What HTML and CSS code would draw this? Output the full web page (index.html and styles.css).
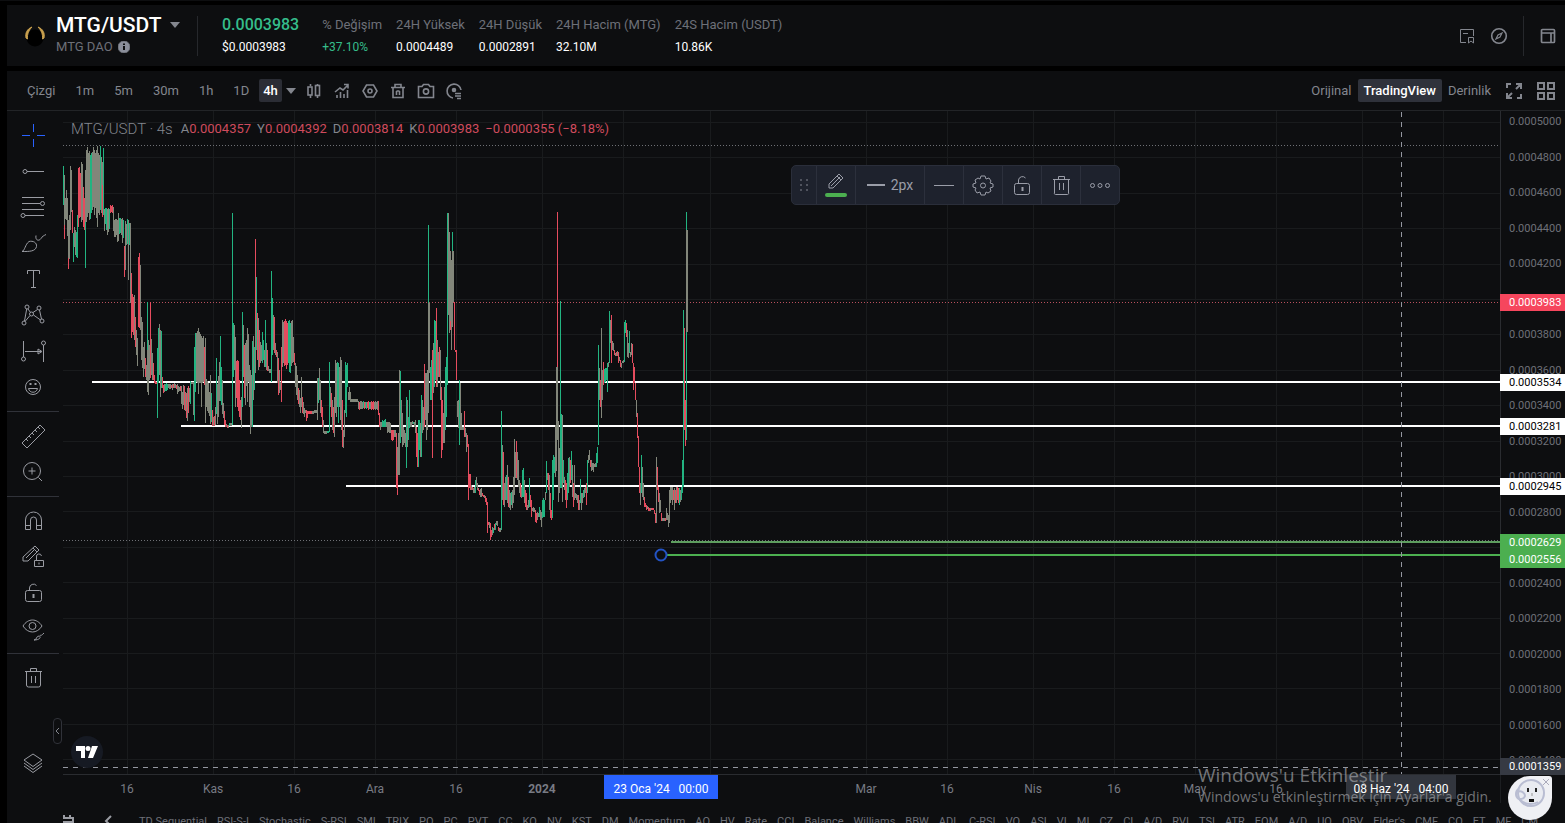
FILE: index.html
```html
<!DOCTYPE html>
<html lang="tr">
<head>
    <meta charset="UTF-8">
    <meta name="viewport" content="width=device-width, initial-scale=1.0">
    <title>MTG/USDT</title>
    <link rel="stylesheet" href="styles.css">
</head>
<body>
    <div class="app">
        <header class="ticker">
            <svg class="coin" width="20" height="22" viewBox="0 0 20 22">
                <circle cx="10" cy="13" r="8.500" fill="#000"/>
                <path d="M7 2C2 4 0 8 1 13l1.500 1C2 9 4 5 7 2zM13 2c5 2 7 6 6 11l-1.500 1C18 9 16 5 13 2z" fill="#c9a04e" stroke="#c9a04e"/>
            </svg>
            <div class="pair">
                <h1>MTG/USDT <span class="caret"></span></h1>
                <p>MTG DAO
                    <svg width="12" height="12" viewBox="0 0 12 12"><circle cx="6" cy="6" r="6" fill="#8b8f9b"/><path d="M6 5v4M6 2.500v1.500" stroke="#0d0e10" stroke-width="2"/></svg>
                </p>
            </div>
            <div class="divider"></div>
            <dl class="stats">
                <div class="last"><dt>0.0003983</dt><dd>$0.0003983</dd></div>
                <div><dt>% Değişim</dt><dd class="up">+37.10%</dd></div>
                <div><dt>24H Yüksek</dt><dd>0.0004489</dd></div>
                <div><dt>24H Düşük</dt><dd>0.0002891</dd></div>
                <div><dt>24H Hacim (MTG)</dt><dd>32.10M</dd></div>
                <div><dt>24S Hacim (USDT)</dt><dd>10.86K</dd></div>
            </dl>
            <div class="ticker-tools">
                <button aria-label="Notlar"><svg width="16" height="16" viewBox="0 0 16 16"><path d="M7 14.500H1.500v-13h13V8M4 5.500h5M9.500 15V9.500h5V15l-2.500-2z"/></svg></button>
                <button aria-label="Keşfet"><svg width="18" height="18" viewBox="0 0 18 18" stroke-width="1.600"><circle cx="9" cy="9" r="7.300"/><path d="M12 6l-2 4-4 2 2-4z" stroke-width="1.200"/></svg></button>
                <div class="divider"></div>
                <button aria-label="Yerleşim"><svg width="16" height="16" viewBox="0 0 16 16" stroke-width="1.700"><rect x="1.500" y="1.500" width="13" height="13" rx="1"/><path d="M2 5h12M11 5v9"/></svg></button>
            </div>
        </header>

        <main class="board">
            <nav class="toolbar">
                <div class="intervals">
                    <button>Çizgi</button>
                    <button>1m</button>
                    <button>5m</button>
                    <button>30m</button>
                    <button>1h</button>
                    <button>1D</button>
                    <button class="active">4h</button>
                    <button class="more" aria-label="Diğer"><span class="caret"></span></button>
                </div>
                <div class="chart-tools">
                    <button aria-label="Mum"><svg width="16" height="16" viewBox="0 0 16 16"><path d="M4.500 1v2M4.500 12v3M11.500 1v1M11.500 13v2"/><rect x="2" y="4" width="4" height="8"/><rect x="9.500" y="2.500" width="4" height="10"/></svg></button>
                    <button aria-label="Göstergeler"><svg width="16" height="16" viewBox="0 0 16 16"><path d="M3 15v-3M6.500 15V9M10 15v-4M13.500 15V7M1 9l5-4 3 2 5-5M10 1.500h4v4"/></svg></button>
                    <button aria-label="Ayarlar"><svg width="16" height="16" viewBox="0 0 16 16"><path d="M4.500 2h7L15 8l-3.500 6h-7L1 8z"/><circle cx="8" cy="8" r="2"/></svg></button>
                    <button aria-label="Sil"><svg width="16" height="16" viewBox="0 0 16 16"><path d="M1 4.500h14M3 5v9.500h10V5M5 4V1.500h6V4M6.500 8v4M9.500 8v4M6.500 8h3"/></svg></button>
                    <button aria-label="Ekran görüntüsü"><svg width="18" height="16" viewBox="0 0 18 16"><path d="M1.500 3.500H5l1.500-2h5l1.500 2h3.500v11h-15z"/><circle cx="9" cy="8.500" r="2.600"/></svg></button>
                    <button aria-label="Emirler"><svg width="18" height="18" viewBox="0 0 18 18"><path d="M8 16a7 7 0 1 1 8-8M10 11.500h6M10 14h6M12 16.500h4"/><circle cx="9" cy="8" r="1.500" fill="currentColor"/></svg></button>
                </div>
                <div class="views">
                    <button>Orijinal</button>
                    <button class="active">TradingView</button>
                    <button>Derinlik</button>
                    <button class="icon" aria-label="Tam ekran"><svg width="18" height="18" viewBox="0 0 18 18" stroke-width="2"><path d="M2 6V2h4M11 2h5v5M16 2l-5 5M16 12v4h-4M7 16H2v-5M2 16l5-5"/></svg></button>
                    <button class="icon" aria-label="Izgara"><svg width="18" height="18" viewBox="0 0 18 18" stroke-width="2"><path d="M1 1h6v6H1zM11 1h6v6h-6zM1 11h6v6H1zM11 11h6v6h-6z"/></svg></button>
                </div>
            </nav>

            <div class="workspace">
                <aside class="drawbar">
                    <div class="group">
                        <button class="cross" aria-label="İmleç"><svg viewBox="0 0 28 28"><path d="M14.500 3v8M14.500 18v8M3 14.500h8M18 14.500h8"/></svg></button>
                        <button aria-label="Çizgi"><svg viewBox="0 0 28 28"><circle cx="6" cy="14.500" r="2"/><path d="M8 14.500h17"/></svg></button>
                        <button aria-label="Fibonacci"><svg viewBox="0 0 28 28"><path d="M3 4.500h22M3 10.500h18M3 16.500h22M6 22.500h19"/><circle cx="23.500" cy="10.500" r="2"/><circle cx="4" cy="22.500" r="2"/></svg></button>
                        <button aria-label="Fırça"><svg viewBox="0 0 28 28"><path d="M3 22.500c3-1 3-7 7-10 4-1 8 1 7.500 5-1 5-7 5-14.500 5zM17 6.500c-1 5 3 6 5 3 1-2 3-3 5-4"/></svg></button>
                        <button aria-label="Metin"><svg viewBox="0 0 28 28"><path d="M8.500 9V5.500h12V9M14.500 5.500v17M12 22.500h5"/></svg></button>
                        <button aria-label="Formasyon"><svg viewBox="0 0 28 28"><circle cx="8" cy="6" r="2"/><circle cx="20" cy="7" r="2"/><circle cx="12.500" cy="13" r="2"/><circle cx="5" cy="22" r="2"/><circle cx="23" cy="20" r="2"/><path d="M7.700 8L5.500 20M9 8l2.500 3.500M14 11.500L18.500 8.500M20.500 9l2 9M11 14.500l-5 6M14.500 14l7 5"/></svg></button>
                        <button aria-label="Ölçüm"><svg viewBox="0 0 28 28"><path d="M4.500 4v16M24.500 8v17M6 14.500h16M19 12l4 2.500-4 2.500z"/><circle cx="4.500" cy="22" r="2"/><circle cx="24.500" cy="6" r="2"/></svg></button>
                        <button aria-label="Simgeler"><svg viewBox="0 0 28 28"><circle cx="14" cy="14" r="7.500"/><path d="M9.500 15.500c1 5 8 5 9 0zM10 11h3M15 11h3M11.500 10v2M16.500 10v2"/></svg></button>
                    </div>
                    <div class="group">
                        <button aria-label="Cetvel"><svg viewBox="0 0 28 28"><path d="M3 21L21 3l5 5L8 26zM7 17l2 2M10 14l2 2M13 11l2 2M16 8l2 2M19 5l2 2"/></svg></button>
                        <button aria-label="Yakınlaştır"><svg viewBox="0 0 28 28"><circle cx="13" cy="13" r="8.500"/><path d="M19.500 19.500l3.500 3.500M9.500 13h7M13 9.500v7"/></svg></button>
                    </div>
                    <div class="group">
                        <button aria-label="Mıknatıs"><svg viewBox="0 0 28 28"><path d="M6.500 22.500V13a8 8 0 0 1 16 0v9.500h-5V13a3 3 0 0 0-6 0v9.500zM6.500 18.500h5M17.500 18.500h5"/></svg></button>
                        <button aria-label="Çizim modu"><svg viewBox="0 0 28 28"><path d="M4 18v-4L16 3l4 4L9 18H4zM14 5l4 4M7 15l9-9M15.500 17.500h9v6h-9zM17.500 17v-3a2.500 2.500 0 0 1 5-1M20 19.500v2"/></svg></button>
                        <button aria-label="Kilitle"><svg viewBox="0 0 28 28"><rect x="6.500" y="11.500" width="16" height="11" rx="2"/><path d="M10.500 11V9a4 4 0 0 1 7-2.500"/><path d="M14.500 15v4" stroke-width="2"/></svg></button>
                        <button aria-label="Gizle"><svg viewBox="0 0 28 28"><path d="M4 11c5-8 14-8 19 0-5 8-14 8-19 0zM15 25c3 0 2-4 5-4 2 0 2 4-5 4zM21 20c1 1 2 0 4-2"/><circle cx="13.500" cy="11" r="3.500"/></svg></button>
                    </div>
                    <div class="group">
                        <button aria-label="Çizimleri sil"><svg viewBox="0 0 28 28"><path d="M6 7.500h17M7.500 8v13a2 2 0 0 0 2 2h10a2 2 0 0 0 2-2V8M11.500 7V4.500h6V7M12.500 12v7M16.500 12v7"/></svg></button>
                    </div>
                    <button class="layers" aria-label="Nesne ağacı"><svg viewBox="0 0 28 28"><path d="M14 5l9 6-9 6.500L5 11zM5 14l9 6.500 9-6.500M5 17l9 6.500 9-6.500"/></svg></button>
                </aside>

                <section class="chart">
                    <div class="pane">
                        <svg class="plot">
                            <g id="grid" class="grid"></g>
                            <line class="dotted" x1="0" x2="100%" y1="34.500" y2="34.500"/>
                            <line class="dotted red" x1="0" x2="100%" y1="191.500" y2="191.500"/>
                            <line class="dotted" x1="0" x2="100%" y1="429.500" y2="429.500"/>
                            <line class="level" x1="29" x2="100%" y1="271" y2="271"/>
                            <line class="level" x1="118" x2="100%" y1="315" y2="315"/>
                            <line class="level" x1="283" x2="100%" y1="375" y2="375"/>
                            <g id="candles" class="candles" transform="translate(-63 -111)"></g>
                            <line class="level green soft" x1="608" x2="100%" y1="431" y2="431"/>
                            <line class="level green" x1="604" x2="100%" y1="444" y2="444"/>
                            <circle cx="598" cy="444" r="5.500" fill="#0d0e10" stroke="#2353c4" stroke-width="2"/>
                            <path class="crosshair" d="M1338.500 1V663"/>
                            <line class="crosshair" x1="0" x2="100%" y1="656.500" y2="656.500"/>
                        </svg>
                        <p class="legend"><span class="symbol">MTG/USDT · 4s</span> <span>A<b>0.0004357</b></span> <span>Y<b>0.0004392</b></span> <span>D<b>0.0003814</b></span> <span>K<b>0.0003983</b></span> <b>−0.0000355 (−8.18%)</b></p>
                        <div class="line-tools">
                            <span class="grip"><svg width="10" height="14" viewBox="0 0 10 14"><path d="M1 1h2v2H1zM7 1h2v2H7zM1 6h2v2H1zM7 6h2v2H7zM1 11h2v2H1zM7 11h2v2H7z" fill="#50535e" stroke="none"/></svg></span>
                            <button aria-label="Renk"><svg viewBox="0 0 28 28"><path d="M7 17v-4L17 3l4 4-10 10zM15 5l4 4M9 15l9-9"/><path d="M5 24h18" stroke="#4caf50" stroke-width="4" stroke-linecap="round"/></svg></button>
                            <button class="wide"><svg width="18" height="4" viewBox="0 0 18 4"><path d="M0 2h18" stroke-width="2"/></svg>2px</button>
                            <button aria-label="Çizgi stili"><svg viewBox="0 0 28 28"><path d="M4 14.500h20"/></svg></button>
                            <button aria-label="Ayarlar"><svg viewBox="0 0 28 28"><path d="M12 5h4l1 3 3-1 2 3-1 2 3 1v3l-3 1 1 3-3 2-2-1-1 3h-4l-1-3-3 1-2-3 1-2-3-1v-3l3-1-1-3 3-2 2 1z"/><circle cx="14" cy="14.500" r="2.500"/></svg></button>
                            <button aria-label="Kilitle"><svg viewBox="0 0 28 28"><rect x="6.500" y="12.500" width="15" height="11" rx="2"/><path d="M10.500 12V9a4 4 0 0 1 7-2"/><path d="M14.500 16v4" stroke-width="2"/></svg></button>
                            <button aria-label="Kaldır"><svg viewBox="0 0 28 28"><path d="M6 8.500h17M7.500 9v13a1 1 0 0 0 1 1.500h12a1 1 0 0 0 1-1.500V9M11.500 8V5.500h6V8M12.500 12v7M16.500 12v7"/></svg></button>
                            <button aria-label="Diğer"><svg viewBox="0 0 28 28"><circle cx="6.500" cy="14.500" r="2"/><circle cx="14" cy="14.500" r="2"/><circle cx="21.500" cy="14.500" r="2"/></svg></button>
                        </div>
                        <button class="fold" aria-label="Paneli gizle"><svg width="5" height="8" viewBox="0 0 5 8"><path d="M4 1L1 4l3 3"/></svg></button>
                        <a class="tv" href="#" aria-label="TradingView"><svg width="22" height="12" viewBox="0 0 22 12"><path d="M0 0h9v12H5V5H0zM16 0h6l-5 12h-5z" fill="#fff" stroke="none"/><circle cx="12" cy="2.500" r="2.500" fill="#fff" stroke="none"/></svg></a>
                    </div>

                    <div class="price-axis">
                        <ul>
                            <li>0.0005000</li>
                            <li>0.0004800</li>
                            <li>0.0004600</li>
                            <li>0.0004400</li>
                            <li>0.0004200</li>
                            <li></li>
                            <li>0.0003800</li>
                            <li>0.0003600</li>
                            <li>0.0003400</li>
                            <li>0.0003200</li>
                            <li>0.0003000</li>
                            <li>0.0002800</li>
                            <li></li>
                            <li>0.0002400</li>
                            <li>0.0002200</li>
                            <li>0.0002000</li>
                            <li>0.0001800</li>
                            <li>0.0001600</li>
                            <li>0.0001400</li>
                        </ul>
                        <span class="tag tag-last">0.0003983</span>
                        <span class="tag tag-a">0.0003534</span>
                        <span class="tag tag-b">0.0003281</span>
                        <span class="tag tag-c">0.0002945</span>
                        <span class="tag tag-d">0.0002629</span>
                        <span class="tag tag-e">0.0002556</span>
                        <span class="tag tag-cursor">0.0001359</span>
                    </div>

                    <div class="time-axis">
                        <svg id="times" class="times"></svg>
                        <span class="date date-anchor">23 Oca '24 &nbsp; 00:00</span>
                        <span class="date date-cursor">08 Haz '24 &nbsp; 04:00</span>
                    </div>
                    <div class="corner"></div>

                    <div class="indicators">
                        <svg width="14" height="14" viewBox="0 0 14 14" stroke-width="2"><path d="M1 3h12v10H1zM1 7h12M4 0v3M10 0v3"/></svg>
                        <svg class="prev" width="8" height="12" viewBox="0 0 8 12" stroke-width="2"><path d="M7 1L2 6l5 5"/></svg>
                        <span>TD Sequential</span><span>RSI-S-I</span><span>Stochastic</span><span>S-RSI</span><span>SMI</span><span>TRIX</span><span>PO</span><span>PC</span><span>PVT</span><span>CC</span><span>KO</span><span>NV</span><span>KST</span><span>DM</span><span>Momentum</span><span>AO</span><span>HV</span><span>Rate</span><span>CCI</span><span>Balance</span><span>Williams</span><span>BBW</span><span>ADL</span><span>C-RSI</span><span>VO</span><span>ASI</span><span>VI</span><span>MI</span><span>CZ</span><span>CI</span><span>A/D</span><span>RVI</span><span>TSI</span><span>ATR</span><span>EOM</span><span>A/D</span><span>UO</span><span>OBV</span><span>Elder's</span><span>CMF</span><span>CO</span><span>ET</span><span>MF</span><span>CM</span>
                    </div>
                </section>
            </div>
        </main>

        <div class="activation">
            <strong>Windows'u Etkinleştir</strong>
            <span>Windows'u etkinleştirmek için Ayarlar'a gidin.</span>
        </div>
        <button class="helper" aria-label="Destek">
            <svg width="44" height="44" viewBox="0 0 44 44">
                <circle cx="23" cy="17" r="13" fill="#e9ebf1" stroke="#b9bdd2" stroke-width="2"/>
                <path d="M11 13c-4 2-4 8 0 10 6 6 14 6 19 3M10 16c3-2 7 1 7 4-1 3-5 4-8 2" fill="none" stroke="#b9bdd2" stroke-width="2"/>
                <path d="M20 12v4M28 12v4" stroke="#222" stroke-width="2"/>
                <path d="M24 17v3" stroke="#999" stroke-width="1"/>
                <path d="M21 23h5v3h-5z" fill="#111" stroke="none"/>
                <path d="M35 3l6 6M41 3l-6 6" stroke="#aab" stroke-width="1"/>
            </svg>
        </button>
    </div>
    <script src="script.js"></script>
</body>
</html>
```
FILE: styles.css
```css
* {
    box-sizing: border-box;
}

body {
    margin: 0;
    background-color: #000;
    color: #83868e;
    font-family: Roboto, "Liberation Sans", sans-serif;
    font-size: 12px;
}

button {
    display: flex;
    align-items: center;
    justify-content: center;
    padding: 0;
    border: none;
    background: none;
    color: inherit;
    font: inherit;
    cursor: pointer;
}

svg {
    display: block;
    fill: none;
    stroke: currentColor;
}

h1, p, dl, dt, dd, ul {
    margin: 0;
    padding: 0;
}

.app {
    display: flex;
    flex-direction: column;
    gap: 5px;
    height: 100vh;
    padding: 4px 0 0 7px;
    overflow: hidden;
    position: relative;
    border-top: 1px solid #0d0e10;
}

.ticker {
    display: flex;
    align-items: center;
    height: 61px;
    flex-shrink: 0;
    padding-left: 18px;
    background-color: #0d0e10;
}

.coin {
    margin-right: 11px;
    stroke: none;
}

.pair {
    width: 122px;
}

.pair h1 {
    display: flex;
    align-items: center;
    gap: 8px;
    font-size: 21px;
    font-weight: 500;
    line-height: 22px;
    color: #fff;
}

.pair p {
    display: flex;
    align-items: center;
    gap: 5px;
    font-size: 13px;
    line-height: 22px;
    color: #6d7078;
}

.caret {
    border: 5px solid transparent;
    border-top: 6px solid #83868e;
    border-bottom: 0;
}

.divider {
    width: 1px;
    height: 40px;
    margin: 0 24px 0 19px;
    background-color: #26282c;
}

.stats {
    display: flex;
    gap: 14px;
    white-space: nowrap;
}

.stats dt {
    font-size: 13px;
    line-height: 22px;
    color: #6d7078;
}

.stats dd {
    font-size: 12px;
    line-height: 22px;
    color: #fff;
}

.stats .last {
    margin-right: 9px;
}

.stats .last dt {
    font-size: 16px;
    font-weight: 500;
    color: #35bd8b;
}

.stats .up {
    color: #35bd8b;
}

.ticker-tools {
    display: flex;
    align-items: center;
    gap: 15px;
    margin-left: auto;
    padding-right: 9px;
}

.ticker-tools .divider {
    margin: 0 1px 0 0;
}

.board {
    display: flex;
    flex-direction: column;
    flex: 1;
    min-height: 0;
    background-color: #0d0e10;
}

.toolbar {
    display: flex;
    align-items: center;
    height: 40px;
    flex-shrink: 0;
    padding: 0 10px;
    border-bottom: 1px solid #222427;
    font-size: 13px;
}

.intervals,
.chart-tools,
.views {
    display: flex;
    align-items: center;
}

.toolbar button {
    height: 23px;
    padding: 0 10px;
    border-radius: 2px;
}

.toolbar .active {
    padding: 0 4px;
    background-color: #2b2d35;
    color: #fff;
    font-weight: 500;
}

.toolbar .more {
    width: 18px;
    padding: 0;
}

.toolbar .chart-tools button {
    width: 28px;
    padding: 0;
}

.chart-tools svg {
    stroke-width: 1.6;
}

.views {
    gap: 6px;
    margin-left: auto;
}

.toolbar .views button {
    padding: 0;
}

.toolbar .views .active {
    padding: 0 6px;
    background-color: #2f323b;
}

.toolbar .views .icon {
    width: 18px;
    margin-left: 8px;
}

.workspace {
    display: flex;
    flex: 1;
    min-height: 0;
}

.drawbar {
    display: flex;
    flex-direction: column;
    width: 52px;
    flex-shrink: 0;
    padding-bottom: 42px;
    color: #9a9ca3;
}

.drawbar button {
    width: 52px;
    height: 36px;
}

.drawbar svg,
.line-tools button svg {
    width: 28px;
    height: 28px;
}

.drawbar .group {
    padding: 6px 0;
}

.drawbar .group + .group {
    border-top: 1px solid #303239;
}

.drawbar .cross {
    color: #2962ff;
}

.drawbar .layers {
    margin-top: auto;
}

.chart {
    display: grid;
    flex: 1;
    min-width: 0;
    grid-template-columns: minmax(0, 1fr) 65px;
    grid-template-rows: minmax(0, 1fr) 28px 20px;
    padding-left: 4px;
}

.pane {
    position: relative;
    border-bottom: 1px solid #2a2c30;
}

.plot,
.times {
    width: 100%;
    height: 100%;
    overflow: hidden;
}

.grid {
    stroke: #191b1d;
}

.dotted {
    stroke: #6e7075;
    stroke-dasharray: 1 2;
}

.dotted.red {
    stroke: #b9505e;
}

.level {
    stroke: #fff;
    stroke-width: 2;
}

.level.green {
    stroke: #4caf50;
}

.level.soft {
    stroke: #5e9e5f;
}

.candles path {
    stroke-width: 1;
}

.candles .g {
    stroke: #22b481;
}

.candles .r {
    stroke: #e54c5e;
}

.candles .n {
    stroke: #82867a;
}

.crosshair {
    stroke: #9598a1;
    stroke-dasharray: 5 5;
}

.legend {
    position: absolute;
    top: 8px;
    left: 8px;
    display: flex;
    gap: 6px;
    font-size: 13px;
    line-height: 20px;
    white-space: nowrap;
}

.legend .symbol {
    margin-right: 2px;
    font-size: 15px;
    font-weight: 300;
}

.legend b {
    font-weight: 400;
    color: #cf4b5d;
}

.line-tools {
    position: absolute;
    top: 54px;
    left: 728px;
    display: flex;
    height: 40px;
    border: 1px solid #2a2e3a;
    border-radius: 5px;
    background-color: #1e222d;
    color: #9a9da8;
}

.line-tools button {
    width: 39px;
    border-left: 1px solid #2c303c;
}

.line-tools .grip {
    display: flex;
    align-items: center;
    justify-content: center;
    width: 24px;
}

.line-tools .wide {
    width: 69px;
    gap: 6px;
    font-size: 14px;
}

.line-tools .wide svg {
    width: 18px;
    height: 4px;
}

.fold {
    position: absolute;
    bottom: 30px;
    left: -10px;
    width: 9px;
    height: 26px;
    border: 1px solid #303239;
    border-radius: 4px;
}

.tv {
    position: absolute;
    bottom: 6px;
    left: 8px;
    display: flex;
    align-items: center;
    justify-content: center;
    width: 32px;
    height: 32px;
    border-radius: 50%;
    background-color: #161a23;
}

.price-axis {
    position: relative;
    border-left: 1px solid #2a2c30;
    font-size: 11px;
    line-height: 14px;
    color: #6d7078;
}

.price-axis ul {
    display: flex;
    flex-direction: column;
    justify-content: space-between;
    height: 100%;
    padding: 4px 0 7px 8px;
    list-style: none;
}

.price-axis li {
    min-height: 14px;
}

.tag {
    position: absolute;
    left: -1px;
    right: 0;
    padding-left: 9px;
    line-height: 17px;
    background-color: #fff;
    color: #000;
}

.tag-last {
    top: 183px;
    background-color: #f6465d;
    color: #fff;
}

.tag-a {
    top: 263px;
}

.tag-b {
    top: 307px;
}

.tag-c {
    top: 367px;
}

.tag-d,
.tag-e {
    top: 423px;
    background-color: #4caf50;
    color: #fff;
}

.tag-e {
    top: 440px;
}

.tag-cursor {
    top: 647px;
    background-color: #363a43;
    color: #fff;
}

.time-axis {
    position: relative;
}

.times text {
    fill: #787b84;
    stroke: none;
    text-anchor: middle;
}

.times .year {
    font-weight: 700;
}

.date {
    position: absolute;
    top: 0;
    height: 24px;
    line-height: 28px;
    text-align: center;
    color: #fff;
}

.date-anchor {
    left: 541px;
    width: 114px;
    background-color: #2962ff;
}

.date-cursor {
    left: 1283px;
    width: 110px;
    background-color: #32363e;
}

.corner {
    border-left: 1px solid #1c1e21;
}

.indicators {
    display: flex;
    grid-column: 1 / -1;
    gap: 10px;
    padding-top: 12px;
    padding-left: 75px;
    position: relative;
    overflow: hidden;
    white-space: nowrap;
    font-size: 11px;
    line-height: 14px;
    color: #6d7078;
}

.indicators svg {
    flex-shrink: 0;
    margin-left: -78px;
    margin-right: 20px;
    color: #9a9ca3;
}

.indicators .prev {
    margin: 0 17px 0 0;
}

.activation {
    position: absolute;
    right: 67px;
    bottom: 16px;
    display: flex;
    flex-direction: column;
    width: 300px;
    font-family: "Open Sans", "Noto Sans", sans-serif;
    color: rgba(160, 162, 166, 0.7);
    white-space: nowrap;
    pointer-events: none;
}

.activation strong {
    font-size: 19px;
    font-weight: 400;
    line-height: 24px;
}

.activation span {
    font-size: 14px;
    line-height: 20px;
}

.helper {
    position: absolute;
    right: 13px;
    bottom: 3px;
    width: 44px;
    height: 44px;
    border-radius: 50% 3px 50% 50%;
    background-color: #eff0f4;
}
```
FILE: script.js
```js
// column, high, low, colour (g = up, r = down, n = mixed)
const columns = `
63,166,205,g 64,175,225,n 64,225,239,r 65,198,219,n 66,190,220,n 67,198,236,n 68,220,258,n 68,258,269,r 69,215,259,n
70,166,230,n 71,170,212,n 72,210,233,r 73,233,262,g 74,227,247,n 75,230,255,n 76,232,257,g 77,215,258,g 78,168,227,r 79,167,218,r
80,173,217,r 81,162,222,n 82,164,220,n 83,187,227,r 84,198,230,r 85,170,222,n 85,222,268,g 86,150,222,n 87,147,217,n 88,153,213,n 89,151,220,n
90,155,219,g 91,153,213,g 92,152,210,n 93,147,207,n 94,150,215,n 95,153,208,n 96,150,218,n 97,146,227,n 98,153,213,n 99,155,215,n
100,146,210,g 101,157,213,n 102,162,185,n 102,185,217,r 103,148,215,g 104,209,231,n 105,208,224,g 106,208,230,g 107,209,235,n 108,208,232,n 109,209,229,g
110,205,213,r 111,206,212,r 112,205,213,r 113,207,231,n 114,220,237,n 115,219,237,n 116,219,235,n 117,220,242,n 118,213,241,n 119,218,234,g
120,218,233,g 121,219,235,n 122,218,243,n 123,220,238,g 124,246,277,r 125,221,270,n 126,224,245,n 127,219,244,g 128,220,280,n 129,223,245,g
130,223,303,n 131,273,338,r 132,294,332,r 133,297,335,r 134,295,340,n 135,317,347,r 136,330,355,n 137,338,366,n 138,257,327,r 139,253,328,r
140,265,330,n 141,317,360,n 142,322,368,n 143,347,377,n 144,342,369,n 145,358,377,r 146,365,380,n 147,302,350,g 147,350,392,n 148,340,395,n 149,345,380,n
150,302,378,r 151,339,375,n 152,353,380,n 153,363,380,r 154,375,383,r 155,381,384,r 156,382,384,r 157,348,418,g 158,328,383,g 159,324,375,n
160,330,397,n 161,331,388,g 162,377,388,r 163,385,393,r 164,384,392,n 165,384,391,g 166,383,391,g 167,384,390,g 168,384,388,n 169,384,389,n
170,384,389,n 171,385,388,r 172,384,390,n 173,384,388,r 174,383,388,n 175,384,388,n 176,385,389,r 177,384,394,n 178,386,392,n 179,387,391,n
180,386,391,r 181,386,404,n 182,392,409,n 183,385,405,n 184,386,410,r 185,392,411,n 186,393,418,r 187,388,421,n 188,386,413,r 189,388,402,n
190,381,404,g 191,382,384,n 192,382,384,n 193,382,415,n 194,347,421,g 195,333,392,g 196,333,382,n 197,331,383,n 198,328,394,n 199,332,383,n
200,334,383,n 201,336,407,n 202,338,383,n 203,336,382,n 204,347,385,r 205,338,423,n 206,379,407,n 207,381,411,n 208,383,413,n 209,392,416,n
210,375,424,n 211,393,422,g 212,410,426,r 213,417,426,n 214,416,426,r 215,407,425,n 216,358,414,g 217,384,424,n 218,376,417,n 219,362,401,n
220,336,401,g 221,367,405,g 222,380,414,n 223,403,418,n 224,411,425,r 225,420,427,r 226,424,427,n 227,425,428,r 228,425,428,n 229,423,426,g
230,423,426,n 231,423,426,n 232,213,425,g 233,323,377,g 234,325,370,n 235,337,407,n 236,361,398,r 237,360,407,r 238,361,411,r 239,380,417,r
240,400,420,r 241,397,428,n 242,312,407,g 243,325,377,n 244,345,398,r 245,343,405,n 246,340,386,n 247,328,402,n 248,334,382,n 249,365,407,n
250,370,434,n 251,375,427,n 252,341,427,g 253,336,400,n 254,347,390,g 255,239,320,r 255,320,373,n 256,277,350,g 257,313,360,r 258,318,370,n 259,330,367,r
260,342,363,n 261,345,361,n 262,332,363,g 263,340,360,g 264,350,367,n 265,320,367,g 266,343,370,n 267,350,371,r 268,366,371,n 269,369,373,n
270,369,373,n 271,271,382,g 272,298,355,g 273,315,350,n 274,317,353,r 275,343,355,n 276,350,357,r 277,352,383,n 278,358,395,r 279,370,393,n
280,382,390,n 281,347,402,r 282,320,367,n 283,322,363,n 284,321,366,r 285,319,365,r 286,321,369,r 287,323,365,r 288,321,363,g 289,320,372,g
290,323,373,g 291,321,366,n 292,320,363,n 293,337,362,n 294,353,365,r 295,363,387,n 296,366,395,n 297,375,400,n 298,388,404,r 299,390,407,n
300,398,413,n 301,377,407,n 302,397,413,r 303,402,414,n 304,408,417,n 305,410,413,n 306,410,421,r 307,411,418,r 308,411,414,r 309,411,414,r
310,411,414,r 311,411,414,r 312,411,414,n 313,411,414,n 314,410,413,n 315,410,413,n 316,410,413,n 317,378,420,n 318,378,403,g 319,368,400,n
320,380,413,n 321,400,417,r 322,407,427,r 323,420,433,n 324,431,434,n 325,431,434,n 326,431,434,n 327,431,433,g 328,431,433,g 329,362,432,g
330,387,407,n 331,393,417,r 332,400,430,n 333,407,433,r 334,397,437,n 335,360,413,n 336,363,417,n 337,362,407,g 338,363,423,g 339,367,407,n
340,357,420,n 341,360,430,n 342,400,447,r 343,430,448,n 344,410,437,n 345,362,413,g 346,365,417,g 347,363,387,g 348,392,400,n 349,387,400,n
350,392,402,n 351,399,402,n 352,399,402,n 353,399,402,n 354,399,402,n 355,399,402,n 356,399,402,n 357,399,402,n 358,401,409,n 359,402,410,r
360,401,409,n 361,401,409,n 362,402,409,n 363,401,408,g 364,402,409,r 365,402,408,n 366,402,409,g 367,402,408,r 368,401,410,r 369,402,409,g
370,402,409,n 371,401,410,r 372,402,409,r 373,401,410,r 374,402,409,n 375,401,410,n 376,402,409,n 377,401,410,n 378,401,415,r 379,413,427,r
380,422,430,n 381,422,427,n 382,420,427,g 383,421,427,g 384,420,427,g 385,419,427,g 386,422,427,n 387,422,433,n 388,422,432,n 389,422,433,n
390,423,433,n 391,430,440,r 392,430,441,r 393,430,440,r 394,430,437,n 395,430,437,n 396,433,488,r 397,447,475,n 397,475,495,r 398,433,475,n 399,370,475,n
400,371,443,g 401,400,437,n 402,413,447,n 403,427,445,n 404,430,443,n 405,433,447,n 406,397,468,g 407,400,447,n 408,417,440,g 409,390,428,g
410,422,427,n 411,422,427,n 412,421,424,n 413,422,424,g 414,422,427,n 415,420,433,n 416,427,457,r 417,433,467,r 418,420,467,g 419,420,450,g
420,423,457,n 421,395,457,g 422,400,433,n 423,407,430,n 424,364,427,r 425,373,420,n 426,373,440,n 427,370,430,n 428,225,303,g 428,303,413,n 429,303,373,n
430,367,400,g 431,360,400,g 432,350,458,r 433,343,393,n 434,320,387,g 435,321,380,g 436,308,387,r 437,340,387,n 438,352,377,n 439,347,377,r
440,350,400,n 441,387,458,r 442,400,450,r 443,413,443,n 444,387,443,n 445,367,430,g 446,357,417,g 447,213,385,g 448,213,315,n 449,232,333,n
450,251,321,n 450,321,330,r 451,260,350,n 452,232,251,g 452,251,327,n 453,251,302,n 454,302,350,r 455,350,352,r 456,350,380,r 457,401,417,n 458,400,428,n 459,380,445,g
460,383,430,n 461,413,430,n 462,427,430,n 463,427,430,n 464,411,437,r 465,428,437,n 466,433,452,n 467,435,447,r 468,444,500,r 469,474,488,r
470,474,490,r 471,485,490,n 472,487,490,r 473,488,493,n 474,487,493,n 475,480,493,g 476,477,487,n 477,483,490,n 478,488,491,r 479,490,495,r
480,489,497,n 481,488,497,n 482,493,496,r 483,495,497,r 484,495,498,n 485,496,502,r 486,498,505,r 487,502,533,r 488,522,525,r 489,522,528,n
490,523,540,r 491,530,537,r 492,527,535,n 493,528,533,g 494,524,530,r 495,523,530,g 496,521,525,n 497,521,526,n 498,527,531,r 499,528,532,n
500,528,532,n 501,411,530,g 502,445,500,n 503,452,505,r 504,483,507,n 505,477,500,n 506,475,500,g 507,465,503,n 508,477,507,r 509,490,508,n
510,493,510,n 511,492,505,g 512,490,508,n 513,477,503,n 514,439,495,n 515,452,478,n 516,441,478,r 517,452,480,n 518,460,487,n 519,480,493,n
520,483,497,r 521,487,498,n 522,470,497,g 523,468,497,g 524,480,503,n 525,490,507,r 526,493,510,r 527,505,510,n 528,500,508,n 529,478,507,g
530,495,507,r 531,500,517,r 532,508,511,n 533,507,512,n 534,508,512,n 535,510,522,r 536,513,523,r 537,512,520,n 538,513,517,n 539,507,517,g
540,510,520,n 541,512,527,n 542,500,518,g 543,498,517,g 544,500,517,g 545,492,500,n 546,461,493,g 547,473,480,n 548,473,490,r 549,475,510,n
550,493,518,r 551,510,520,r 552,460,518,g 553,455,500,g 554,457,473,g 555,425,477,n 556,367,471,n 557,212,367,r 557,367,440,n 558,421,502,n 559,448,493,n
560,301,488,g 561,414,488,g 562,415,502,n 563,460,483,g 564,477,490,n 565,480,500,r 566,483,508,r 567,473,500,g 568,458,493,g 569,457,487,n
570,460,483,r 571,451,480,g 572,465,497,n 573,483,507,r 574,465,500,n 575,493,498,n 576,494,500,n 577,495,503,n 578,495,510,r 579,500,510,n
580,479,503,g 581,493,510,n 582,493,503,n 583,490,498,g 584,488,497,n 585,487,493,n 586,483,505,r 587,460,493,g 588,455,463,n 589,450,460,n
590,460,467,r 591,460,471,n 592,463,470,n 593,463,472,n 594,464,467,n 595,463,467,n 596,453,467,g 597,447,463,g 598,345,445,g 599,368,400,n
600,380,407,r 601,328,418,n 602,370,400,n 603,362,385,r 604,369,383,g 605,368,382,g 606,368,380,g 607,363,392,g 608,362,367,n 609,311,363,g
610,320,343,n 611,315,363,r 612,341,350,n 613,343,351,n 614,350,355,r 615,353,356,n 616,352,356,r 617,351,356,n 618,352,363,r 619,357,361,n
620,360,367,r 621,363,368,n 622,361,363,n 623,360,363,n 624,322,362,g 625,320,333,g 626,323,337,r 627,330,357,n 628,343,358,n 629,331,353,g
630,352,357,n 631,343,355,n 632,344,363,r 633,363,390,r 634,367,383,r 635,383,400,r 636,400,417,n 637,413,438,r 638,436,467,r 639,467,493,r
640,483,505,n 641,455,493,g 642,467,497,n 643,483,500,n 644,497,507,r 645,503,507,r 646,505,510,r 647,506,509,n 648,507,511,r 649,508,511,r
650,508,511,n 651,508,510,r 652,508,510,r 653,508,510,r 654,510,514,r 655,513,523,r 656,457,523,n 657,467,490,r 658,487,502,r 659,493,513,n
660,500,512,n 661,513,521,r 662,518,521,n 663,518,521,n 664,518,521,n 665,518,521,r 666,508,520,n 667,513,520,n 668,515,527,n 669,490,523,n
670,487,503,n 671,487,500,n 672,487,505,n 673,490,500,r 674,488,510,n 675,490,503,r 676,487,503,n 677,487,500,r 678,488,503,r 679,488,505,g
680,490,502,n 681,487,500,g 682,460,493,g 683,310,487,g 684,328,430,r 685,400,446,r 686,212,230,g 686,230,332,n 686,332,440,g 687,230,332,n`;

const paths = { n: '', g: '', r: '' };
columns.trim().split(/\s+/).forEach(item => {
    const [x, high, low, colour] = item.split(',');
    paths[colour] += `M${x}.5 ${high}V${low}`;
});

document.getElementById('candles').innerHTML = Object.keys(paths)
    .map(key => `<path class="${key}" d="${paths[key]}"/>`)
    .join('');

const times = [
    [64, '16'], [150, 'Kas'], [231, '16'], [312, 'Ara'], [393, '16'], [479, '2024'],
    [560, ''], [647, ''], [803, 'Mar'], [884, '16'], [970, 'Nis'], [1051, '16'],
    [1132, 'May'], [1213, '16'], [1299, ''], [1380, '']
];

let grid = '';
for (let i = 0; i < 19; i++) {
    const y = Math.round(11 + i * 35.4) + 0.5;
    grid += `<line x1="0" x2="100%" y1="${y}" y2="${y}"/>`;
}
times.forEach(([x]) => {
    grid += `<line x1="${x}.5" x2="${x}.5" y1="0" y2="100%"/>`;
});
document.getElementById('grid').innerHTML = grid;

document.getElementById('times').innerHTML = times
    .filter(([, label]) => label)
    .map(([x, label]) => `<text class="${label === '2024' ? 'year' : 'tick'}" x="${x}" y="18">${label}</text>`)
    .join('');
```
